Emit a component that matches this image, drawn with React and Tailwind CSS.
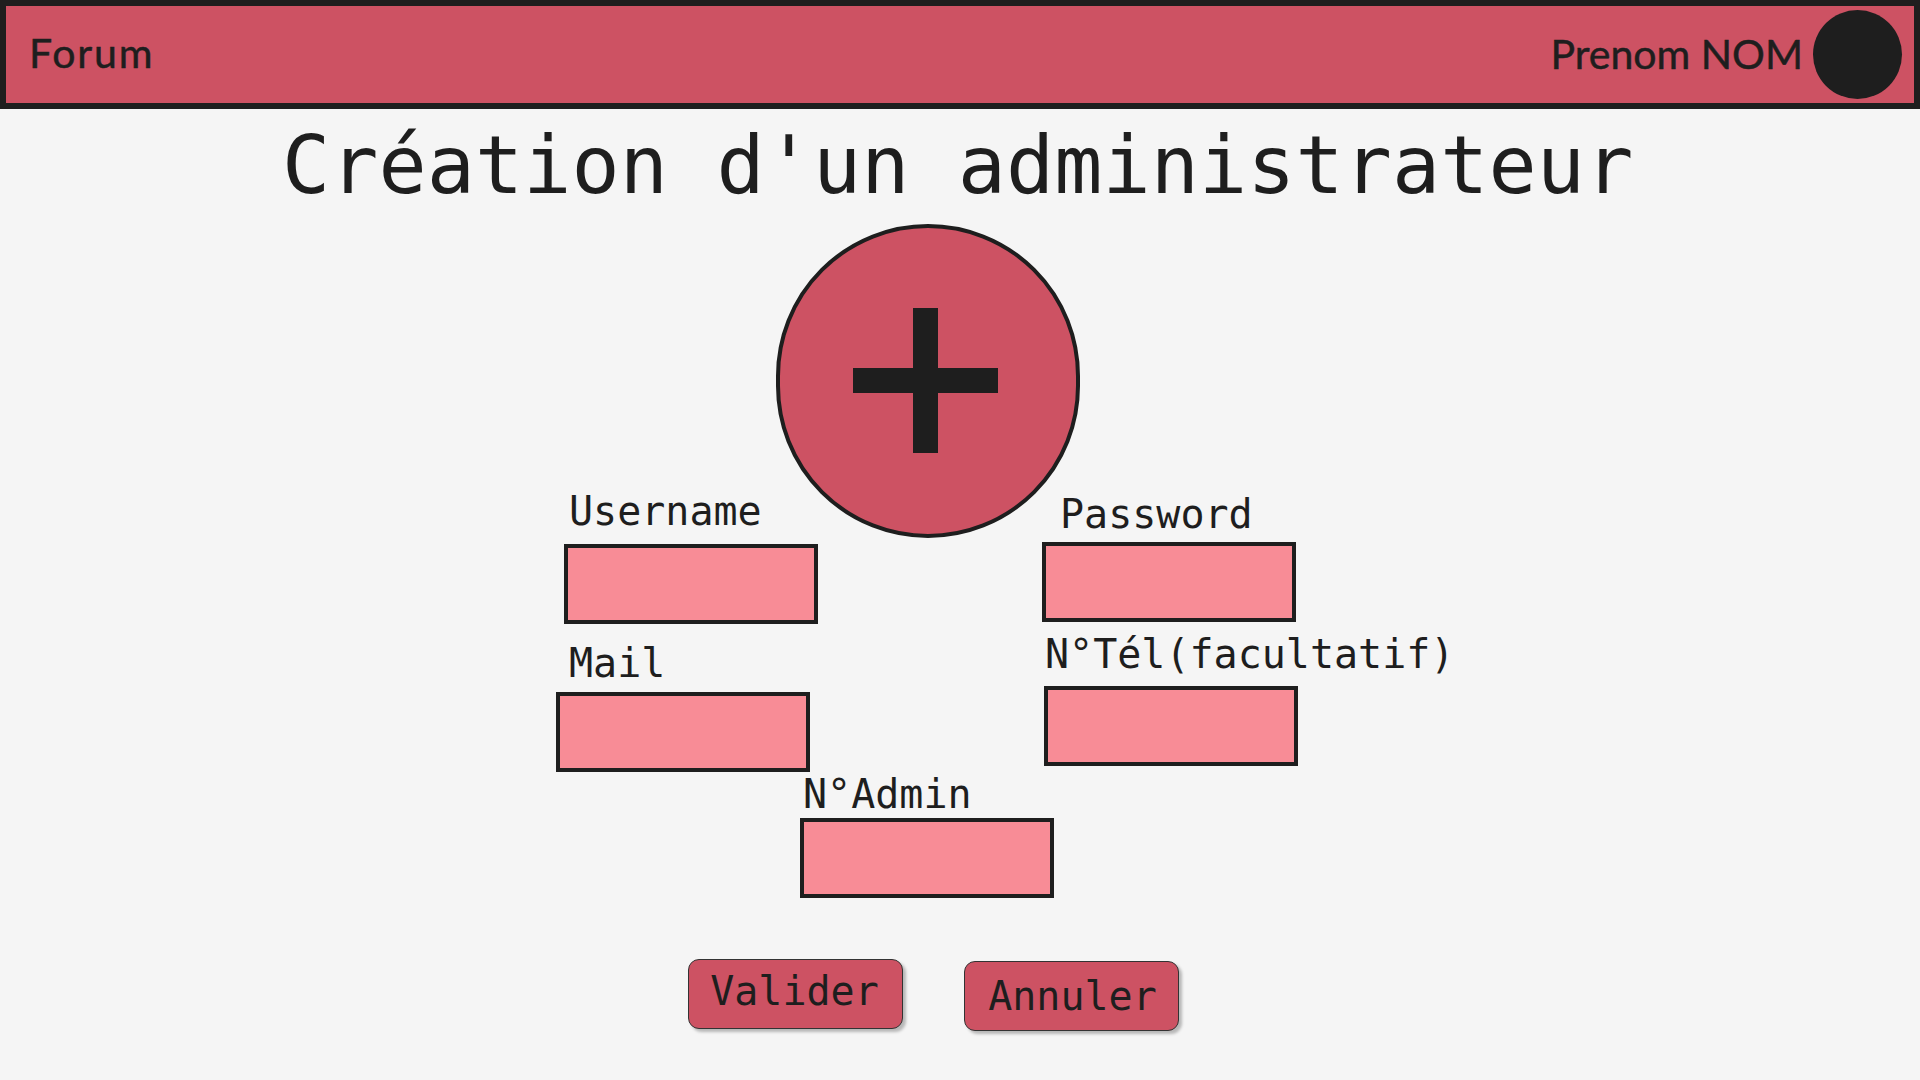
const mono = "font-['DejaVu_Sans_Mono',monospace]";

const Field = ({ label, boxClass, labelClass }) => (
    <div>
        <div className={`${mono} text-[40px] leading-[48px] text-[#1e1e1e] whitespace-nowrap ${labelClass}`}>{label}</div>
        <div className={`w-[254px] h-[80px] bg-[#f88c96] border-[4px] border-[#1e1e1e] ${boxClass}`} />
    </div>
);

const ActionButton = ({ children, className }) => (
    <button className={`${mono} w-[215px] h-[70px] rounded-[11px] bg-[#cd5263] border border-[#333] shadow-[3px_3px_3px_rgba(0,0,0,0.25)] text-[40px] leading-none text-[#1e1e1e] ${className}`}>
        {children}
    </button>
);

export default function App() {
    return (
        <div className="w-[1920px] h-[1080px] overflow-hidden bg-[#f5f5f5]">
            <header className="h-[109px] flex items-center justify-between pl-[23px] pr-[12px] bg-[#cd5263] border-[6px] border-[#1e1e1e] font-['Lato',sans-serif] font-normal text-[41px] [-webkit-text-stroke:0.5px_#1e1e1e] text-[#1e1e1e]">
                <span className="-mt-[4px] tracking-[1.8px]">Forum</span>
                <div className="flex items-center gap-[10px]">
                    <span className="-mt-[1px]">Prenom NOM</span>
                    <div className="w-[89px] h-[89px] rounded-full bg-[#1e1e1e]" />
                </div>
            </header>

            <h1 className={`${mono} mt-[12px] ml-[282px] text-[80px] tracking-[0.1px] leading-[90px] text-[#1e1e1e] whitespace-nowrap`}>Création d'un administrateur</h1>

            <div className="mt-[13px] ml-[776px] w-[304px] h-[314px] rounded-full bg-[#cd5263] border-[4px] border-[#1e1e1e] flex items-center justify-center">
                <svg width="145" height="145" viewBox="0 0 145 145" className="-ml-[6px] -mt-[2px]">
                    <rect x="60" y="0" width="25" height="145" fill="#1e1e1e" />
                    <rect x="0" y="60" width="145" height="25" fill="#1e1e1e" />
                </svg>
            </div>

            {/* form rows overlap the circle bottom a bit, like the mockup */}
            <div className="-mt-[51px] ml-[556px] grid grid-cols-[486px_1fr]">
                <div>
                    <Field label="Username" labelClass="ml-[13px]" boxClass="ml-[8px] mt-[9px]" />
                    <div className="mt-[15px]">
                        <Field label="Mail" labelClass="ml-[13px]" boxClass="mt-[5px]" />
                    </div>
                </div>
                <div className="mt-[3px]">
                    <Field label="Password" labelClass="ml-[18px]" boxClass="mt-[4px]" />
                    <div className="mt-[8px]">
                        <Field label="N°Tél(facultatif)" labelClass="ml-[3px]" boxClass="ml-[2px] mt-[8px]" />
                    </div>
                </div>
            </div>

            <div className="-mt-[2px] ml-[800px]">
                <Field label="N°Admin" labelClass="ml-[3px]" />
            </div>

            <div className="mt-[61px] ml-[688px] flex items-start gap-[61px]">
                <ActionButton className="pb-[6px] pr-[2px]">Valider</ActionButton>
                <ActionButton className="mt-[2px] pl-[2px]">Annuler</ActionButton>
            </div>
        </div>
    );
}
